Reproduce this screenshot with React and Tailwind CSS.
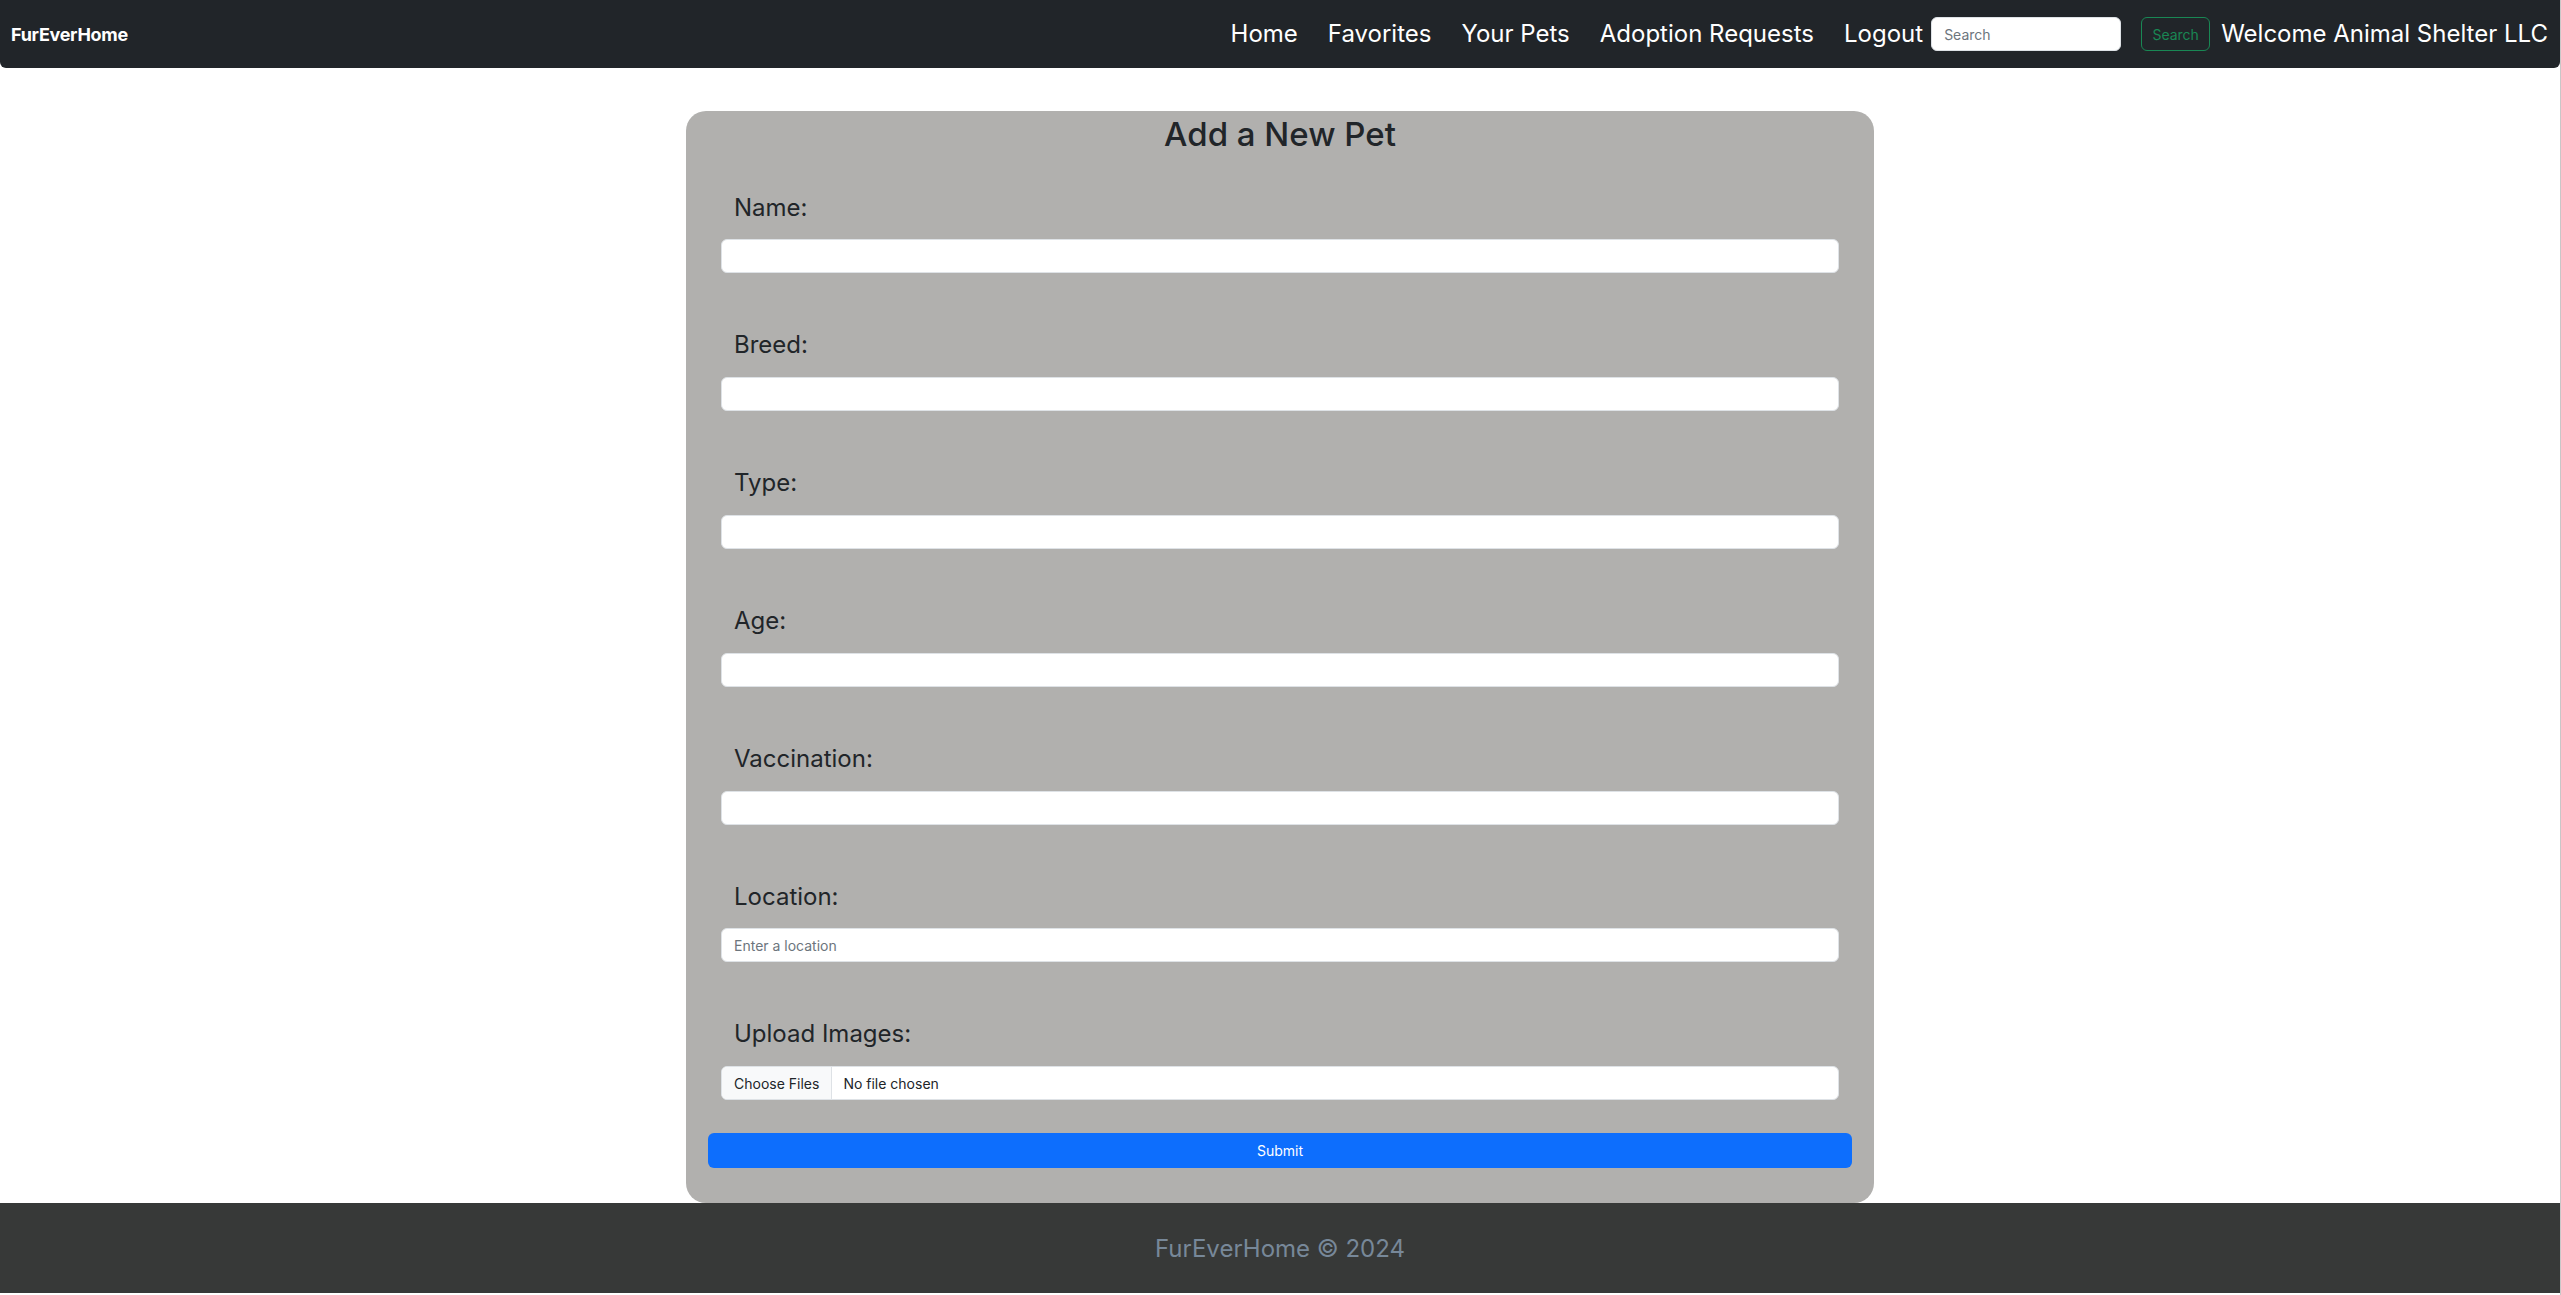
import React from 'react';

const fields = ['Name:', 'Breed:', 'Type:', 'Age:', 'Vaccination:', 'Location:'];

const Navbar = () => (
  <nav className="h-[68px] bg-[#212529] rounded-b-[6px] flex items-center pl-[11px] pr-[12px]">
    <a className="text-white text-[18px] font-bold tracking-[-0.3px]">FurEverHome</a>
    <div className="ml-auto flex items-center">
      <ul className="flex items-center gap-[30px] text-white text-[24px] leading-none">
        <li>Home</li>
        <li>Favorites</li>
        <li>Your Pets</li>
        <li>Adoption Requests</li>
        <li>Logout</li>
      </ul>
      <form className="flex items-center ml-[8px]" onSubmit={(e) => e.preventDefault()}>
        <input
          type="search"
          placeholder="Search"
          className="w-[190px] h-[34px] bg-white rounded-[6px] border border-[#dee2e6] px-[12px] text-[14px] text-[#212529] placeholder-[#6c757d] outline-none"
        />
        <button className="ml-[20px] w-[69px] h-[34px] rounded-[6px] border border-[#198754] text-[#198754] text-[14px]">
          Search
        </button>
      </form>
      <span className="ml-[11px] text-white text-[24px] leading-none">Welcome Animal Shelter LLC</span>
    </div>
  </nav>
);

const Field = ({ label }) => (
  <div className="flex flex-col">
    <label className="pl-[13px] text-[24px] leading-[1.2] text-[#212529]">{label}</label>
    <input
      type="text"
      placeholder={label === 'Location:' ? 'Enter a location' : ''}
      className="mt-[17px] h-[34px] w-full bg-white rounded-[6px] border border-[#dee2e6] px-[12px] text-[14px] text-[#212529] placeholder-[#6c757d] outline-none"
    />
  </div>
);

const App = () => {
  return (
    <div className="min-h-screen bg-white border-r border-[#c8c8c8] font-['Inter','Liberation_Sans',sans-serif]">
      <Navbar />

      <main className="pt-[43px] flex justify-center">
        <div className="w-[1188px] bg-[#b1b0ae] rounded-[20px] pt-[4px] px-[22px] pb-[35px]">
          <h2 className="text-center text-[33px] leading-[1.2] font-medium text-[#212529]">Add a New Pet</h2>

          <div className="px-[13px] mt-[39px] flex flex-col gap-[58px]">
            {fields.map((f) => (
              <Field key={f} label={f} />
            ))}
            <div className="flex flex-col">
              <label className="pl-[13px] text-[24px] leading-[1.2] text-[#212529]">Upload Images:</label>
              <div className="mt-[17px] h-[34px] w-full bg-white rounded-[6px] border border-[#dee2e6] flex items-center overflow-hidden text-[14px] text-[#212529]">
                <span className="h-full flex items-center px-[12px] bg-[#f8f9fa] border-r border-[#dee2e6]">Choose Files</span>
                <span className="pl-[11px]">No file chosen</span>
              </div>
            </div>
          </div>

          <button className="mt-[33px] w-full h-[35px] bg-[#0d6efd] rounded-[6px] text-white text-[14px]">
            Submit
          </button>
        </div>
      </main>

      <footer className="h-[90px] bg-[#373938] flex items-center justify-center pt-[2px]">
        <p className="text-[24px] text-[#778899]">FurEverHome © 2024</p>
      </footer>
    </div>
  );
};

export default App;
